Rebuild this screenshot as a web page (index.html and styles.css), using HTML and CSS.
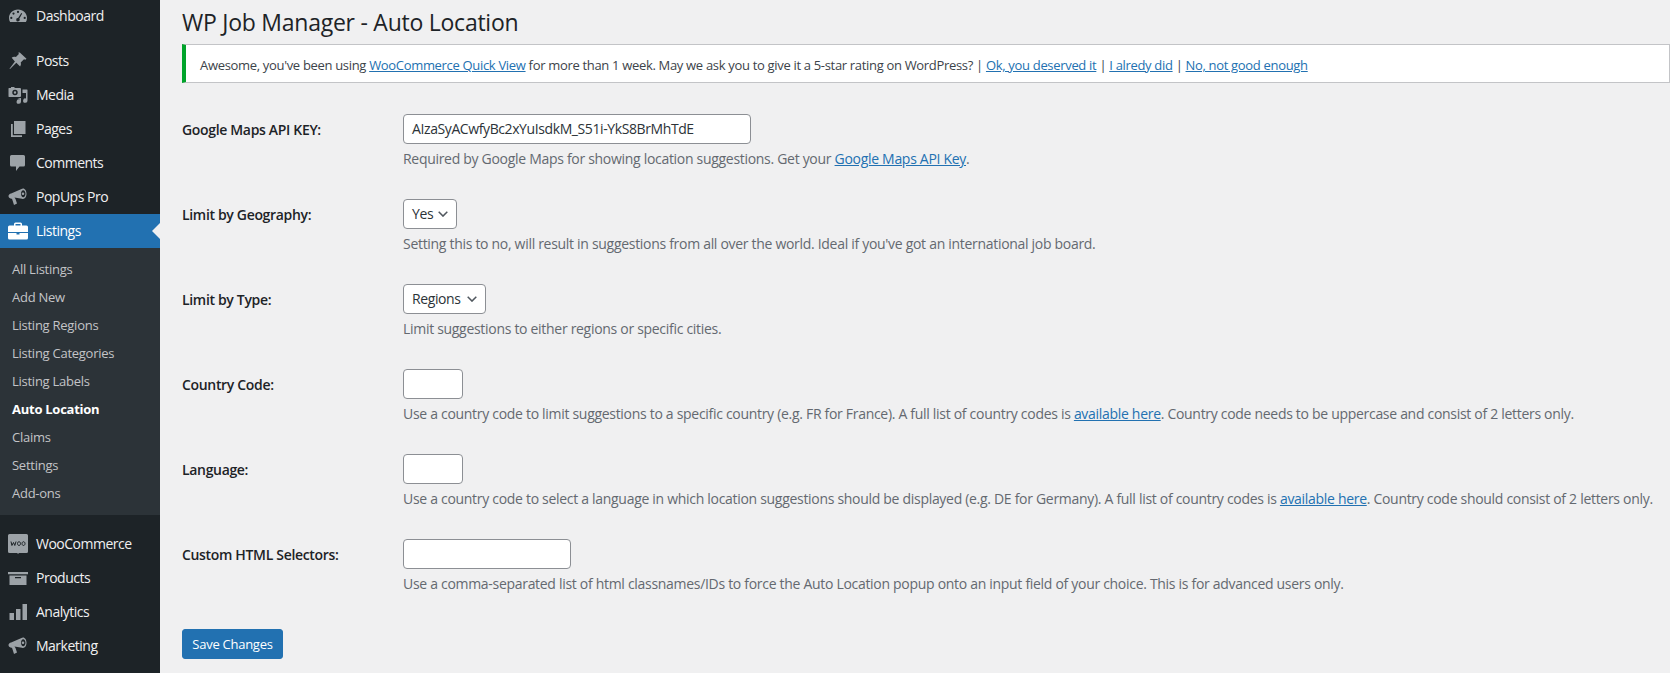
FILE: index.html
```html
<!DOCTYPE html>
<html lang="en">
<head>
<meta charset="utf-8">
<title>WP Job Manager - Auto Location</title>
<link rel="stylesheet" href="styles.css">
</head>
<body>
<div class="shell">
<nav class="sidebar">
  <ul class="menu menu-top">
    <li class="item"><svg class="ico" viewBox="0 0 20 20"><path d="M10 3.500C4.800 3.500 1 7.400 1 12c0 1.500.4 2.900 1.100 4h15.800c.7-1.100 1.100-2.500 1.100-4 0-4.600-3.800-8.500-9-8.500zM10 4.800a1.100 1.100 0 1 1 0 2.200 1.100 1.100 0 0 1 0-2.200zM5.500 6.500a1.100 1.100 0 1 1 0 2.200 1.100 1.100 0 0 1 0-2.200zM3.300 10.800a1.100 1.100 0 1 1 0 2.200 1.100 1.100 0 0 1 0-2.200zM13.300 7l.9.5-2.900 5.300a1.700 1.700 0 1 1-1.200-.7zM16.700 10.800a1.100 1.100 0 1 1 0 2.200 1.100 1.100 0 0 1 0-2.200z" fill-rule="evenodd"/></svg><span>Dashboard</span></li>
  </ul>
  <ul class="menu menu-group">
    <li class="item"><svg class="ico" viewBox="0 0 20 20"><path d="M11.800 1.500l6.700 6.200-1.200 1.100-1.300-.5-3.300 3.200c.5 1.500.2 2.900-.6 3.900L8.300 11.700 2 18l-.5-.2 5.400-7.400-3.200-3.700c1.100-.9 2.600-1.200 4.200-.6l3-3.200-.6-1.300z"/></svg><span>Posts</span></li>
    <li class="item"><svg class="ico" viewBox="0 0 20 20"><path d="M1 3h2V2h3l1 1h5a1 1 0 0 1 1 1v7a1 1 0 0 1-1 1H1.500A.8.8 0 0 1 .5 11V3.500c0-.3.200-.5.500-.5zm6 1.800A2.700 2.700 0 1 0 7 10.200 2.700 2.700 0 0 0 7 4.800zM7 6.300a1.200 1.200 0 1 1 0 2.400 1.200 1.200 0 0 1 0-2.400zM14.500 4.500h4.500a.5.500 0 0 1 .5.5v10.500a2.200 2.200 0 1 1-1.500-2V8h-3.500zM9.500 13.500l3.500-.5v3.500a2.200 2.200 0 1 1-1.500-2V14z" fill-rule="evenodd"/></svg><span>Media</span></li>
    <li class="item"><svg class="ico" viewBox="0 0 20 20"><path d="M6 2h11.500v13H6zM3 5h1.800v11.200H14V18H3z"/></svg><span>Pages</span></li>
    <li class="item"><svg class="ico" viewBox="0 0 20 20"><path d="M3.500 2h12a1.500 1.500 0 0 1 1.500 1.500v8.500a1.500 1.500 0 0 1-1.500 1.500h-4l-3.500 4.500v-4.500h-4.500A1.500 1.500 0 0 1 2 12V3.500A1.500 1.500 0 0 1 3.500 2z"/></svg><span>Comments</span></li>
    <li class="item"><svg class="ico" viewBox="0 0 20 20"><path d="M15 1.500c2 0 3.500 2.400 3.500 5.300s-1.500 5.200-3.500 5.200c-.4 0-.7-.1-1-.3L6.500 10.500l1 1.500L9 16.500 6 18l-2-6.200-.9-.1c-1.500-.3-2.600-1.400-2.600-2.700s1.100-2.300 2.600-2.600L13.500 2c.4-.3 1-.5 1.500-.5zm.2 1.800c-1.200 0-2.200 1.600-2.200 3.500s1 3.500 2.200 3.500 2.300-1.600 2.300-3.500-1.100-3.500-2.300-3.500zm-.2 2.200a1.300 1.300 0 1 1 0 2.600 1.300 1.300 0 0 1 0-2.600z" fill-rule="evenodd"/></svg><span>PopUps Pro</span></li>
    <li class="item current"><svg class="ico" viewBox="0 0 20 20"><path d="M7.500 1.500h5A1.500 1.500 0 0 1 14 3v1.500h4.500A1.500 1.500 0 0 1 20 6v5H0V6a1.500 1.500 0 0 1 1.500-1.500H6V3a1.500 1.500 0 0 1 1.500-1.500zM7.500 3v1.500h5V3zM0 12h8.500v1.500h3V12H20v5a1.500 1.500 0 0 1-1.500 1.500h-17A1.500 1.500 0 0 1 0 17z" fill-rule="evenodd"/></svg><span>Listings</span></li>
  </ul>
  <ul class="submenu">
    <li>All Listings</li>
    <li>Add New</li>
    <li>Listing Regions</li>
    <li>Listing Categories</li>
    <li>Listing Labels</li>
    <li class="sub-current">Auto Location</li>
    <li>Claims</li>
    <li>Settings</li>
    <li>Add-ons</li>
  </ul>
  <ul class="menu menu-group">
    <li class="item"><svg class="ico" viewBox="0 0 20 20"><path d="M1.500 0h17A1.500 1.500 0 0 1 20 1.500v16a1.500 1.500 0 0 1-1.500 1.500h-7.500l-1 1-.8-1H1.500A1.500 1.500 0 0 1 0 17.500v-16A1.500 1.500 0 0 1 1.500 0z"/><path class="woo-text" d="M3 7.500l.9 4L5.500 8.500l1.300 3L8 7.500M11 7.700a1.500 1.900 0 1 0 .01 0M15.500 7.700a1.500 1.900 0 1 0 .01 0"/></svg><span>WooCommerce</span></li>
    <li class="item"><svg class="ico" viewBox="0 0 20 20"><path d="M0 4h20v2.300H0zM1.500 7.500h17V17h-17zM7 9v1.200h6V9z" fill-rule="evenodd"/></svg><span>Products</span></li>
    <li class="item"><svg class="ico" viewBox="0 0 20 20"><path d="M1.500 11h4.500v7H1.500zM8 7h4.500v11H8zM14.500 2H19v16h-4.500z"/></svg><span>Analytics</span></li>
    <li class="item"><svg class="ico" viewBox="0 0 20 20"><path d="M15 1.500c2 0 3.500 2.400 3.500 5.300s-1.500 5.200-3.500 5.200c-.4 0-.7-.1-1-.3L6.500 10.500l1 1.500L9 16.500 6 18l-2-6.200-.9-.1c-1.500-.3-2.600-1.400-2.600-2.700s1.100-2.300 2.600-2.600L13.500 2c.4-.3 1-.5 1.500-.5zm.2 1.800c-1.200 0-2.200 1.600-2.200 3.500s1 3.500 2.200 3.500 2.300-1.600 2.300-3.500-1.100-3.500-2.300-3.500zm-.2 2.200a1.300 1.300 0 1 1 0 2.600 1.300 1.300 0 0 1 0-2.600z" fill-rule="evenodd"/></svg><span>Marketing</span></li>
  </ul>
</nav>
<main class="content">
  <h1 class="title">WP Job Manager - Auto Location</h1>
  <div class="notice">Awesome, you've been using <a href="#">WooCommerce Quick View</a> for more than 1 week. May we ask you to give it a 5-star rating on WordPress? | <a href="#">Ok, you deserved it</a> | <a href="#">I alredy did</a> | <a href="#">No, not good enough</a></div>
  <form class="form">
    <div class="row">
      <label class="label">Google Maps API KEY:</label>
      <div class="field">
        <div class="control text wide">AIzaSyACwfyBc2xYuIsdkM_S51i-YkS8BrMhTdE</div>
        <p class="desc">Required by Google Maps for showing location suggestions. Get your <a href="#">Google Maps API Key</a>.</p>
      </div>
    </div>
    <div class="row">
      <label class="label">Limit by Geography:</label>
      <div class="field">
        <div class="control select sel-yes">Yes<svg class="chev" viewBox="0 0 10 6"><path d="M.7.8L5 5.100 9.300.8"/></svg></div>
        <p class="desc">Setting this to no, will result in suggestions from all over the world. Ideal if you've got an international job board.</p>
      </div>
    </div>
    <div class="row">
      <label class="label">Limit by Type:</label>
      <div class="field">
        <div class="control select sel-reg">Regions<svg class="chev" viewBox="0 0 10 6"><path d="M.7.8L5 5.100 9.300.8"/></svg></div>
        <p class="desc">Limit suggestions to either regions or specific cities.</p>
      </div>
    </div>
    <div class="row">
      <label class="label">Country Code:</label>
      <div class="field">
        <div class="control text short"></div>
        <p class="desc">Use a country code to limit suggestions to a specific country (e.g. FR for France). A full list of country codes is <a href="#">available here</a>. Country code needs to be uppercase and consist of 2 letters only.</p>
      </div>
    </div>
    <div class="row">
      <label class="label">Language:</label>
      <div class="field">
        <div class="control text short"></div>
        <p class="desc">Use a country code to select a language in which location suggestions should be displayed (e.g. DE for Germany). A full list of country codes is <a href="#">available here</a>. Country code should consist of 2 letters only.</p>
      </div>
    </div>
    <div class="row">
      <label class="label">Custom HTML Selectors:</label>
      <div class="field">
        <div class="control text mid"></div>
        <p class="desc">Use a comma-separated list of html classnames/IDs to force the Auto Location popup onto an input field of your choice. This is for advanced users only.</p>
      </div>
    </div>
    <button class="save" type="button">Save Changes</button>
  </form>
</main>
</div>
</body>
</html>
```
FILE: styles.css
```css
* { box-sizing: border-box; }
html, body { margin: 0; height: 100%; overflow: hidden; }
body {
  background: #f0f0f1;
  color: #3c434a;
  font-family: "Open Sans", "Noto Sans", "Liberation Sans", sans-serif;
  font-size: 13px;
  letter-spacing: -0.26px;
}
ul { list-style: none; margin: 0; padding: 0; }
a { color: #2271b1; text-decoration: underline; }

.shell { display: flex; height: 673px; }

.sidebar {
  width: 160px;
  flex: none;
  background: #1d2327;
  color: #f0f0f1;
  font-size: 14px;
  letter-spacing: -0.5px;
}
.item {
  display: flex;
  align-items: center;
  height: 34px;
  padding-left: 8px;
  gap: 8px;
  position: relative;
}
.item span { padding-bottom: 2px; }
.menu-top .item { height: 32px; }
.menu-group { padding-top: 12px; }
.ico { width: 20px; height: 20px; fill: #9ca2a7; flex: none; }
.woo-text { fill: none; stroke: #1d2327; stroke-width: 1; }
.current { background: #2271b1; color: #fff; }
.current .ico { fill: #fff; }
.current::after {
  content: "";
  position: absolute;
  right: 0;
  top: 9px;
  border: 8px solid transparent;
  border-right-color: #f0f0f1;
  border-left-width: 0;
}
.submenu {
  background: #2c3338;
  padding: 7px 0 8px;
  color: #c3c4c7;
  font-size: 13px;
  letter-spacing: -0.26px;
}
.submenu li {
  height: 28px;
  line-height: 28px;
  padding-left: 12px;
}
.sub-current { color: #fff; font-weight: 700; }

.content { flex: 1; min-width: 0; padding-left: 22px; white-space: nowrap; }
.title {
  margin: 0;
  height: 44px;
  line-height: 44px;
  font-size: 23px;
  font-weight: 400;
  letter-spacing: -0.25px;
  color: #1d2327;
}
.notice {
  height: 39px;
  line-height: 40px;
  background: #fff;
  border: 1px solid #c3c4c7;
  border-left: 4px solid #00a32a;
  padding-left: 14px;
  color: #3c434a;
  letter-spacing: -0.32px;
}
.form { padding-top: 31px; }
.row { display: flex; height: 85px; }
.label {
  width: 221px;
  flex: none;
  font-size: 14px;
  font-weight: 600;
  letter-spacing: -0.33px;
  color: #1d2327;
  line-height: 30px;
  padding-top: 1px;
}
.field { flex: 1; min-width: 0; }
.control {
  height: 30px;
  line-height: 28px;
  background: #fff;
  border: 1px solid #8c8f94;
  border-radius: 4px;
  padding-left: 8px;
  color: #2c3338;
  font-size: 14px;
  letter-spacing: -0.4px;
}
.wide { width: 348px; }
.short { width: 60px; }
.mid { width: 168px; }
.select { display: flex; align-items: center; justify-content: space-between; padding-right: 8px; }
.sel-yes { width: 54px; }
.sel-reg { width: 83px; }
.chev { width: 10px; height: 6px; fill: none; stroke: #50575e; stroke-width: 1.500; }
.desc { margin: 5px 0 0; line-height: 20px; color: #646970; font-size: 14px; letter-spacing: -0.3px; }
.save {
  display: block;
  margin-top: 5px;
  width: 101px;
  height: 30px;
  padding: 0;
  background: #2271b1;
  border: 1px solid #2271b1;
  border-radius: 3px;
  color: #fff;
  font: inherit;
  letter-spacing: inherit;
}
```
